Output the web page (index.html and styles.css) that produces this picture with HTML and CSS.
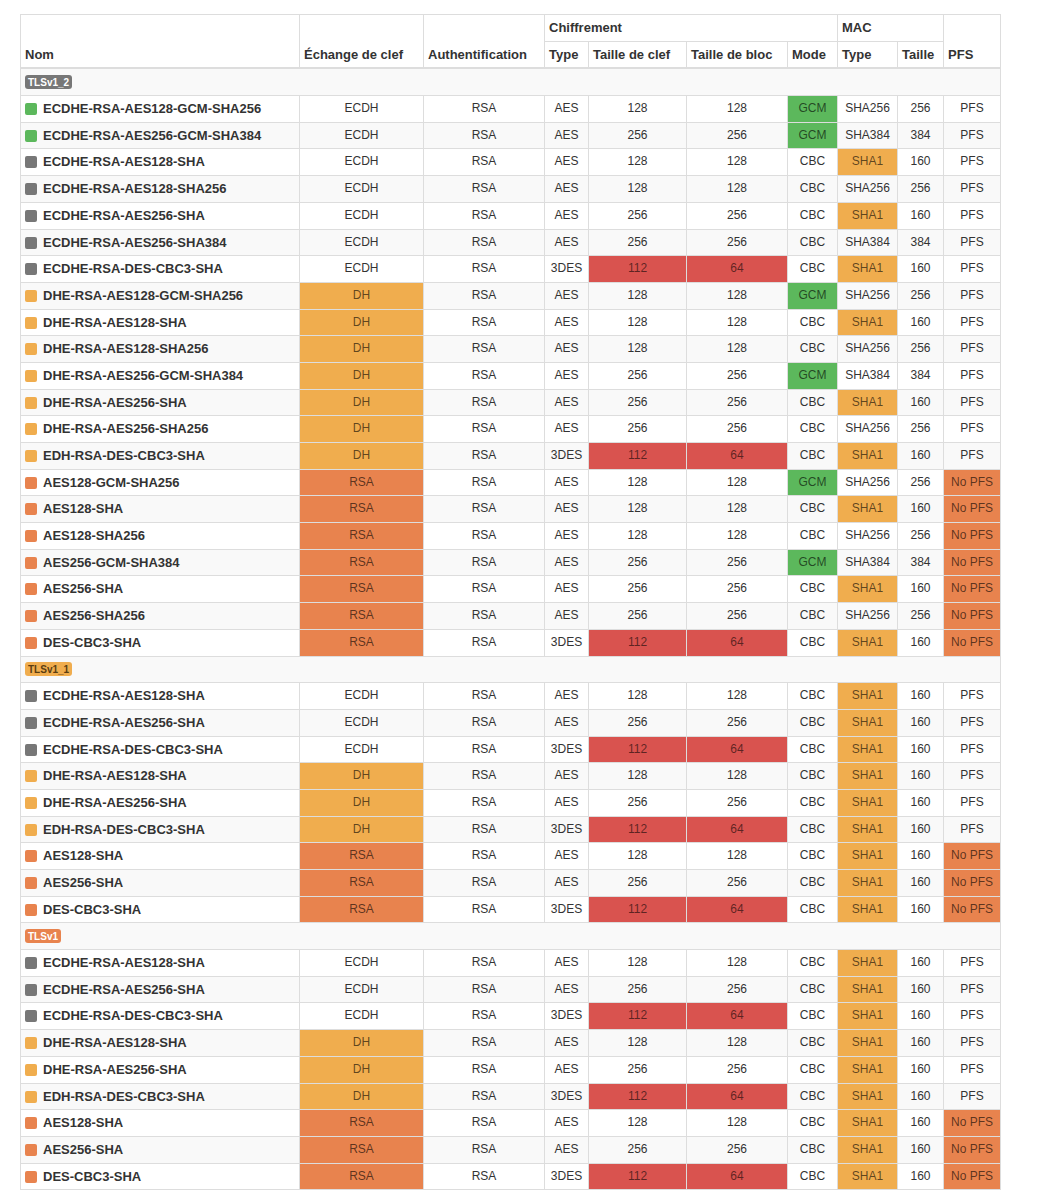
FILE: index.html
```html
<!DOCTYPE html>
<html lang="fr">
<head>
<meta charset="utf-8">
<title>Suites de chiffrement</title>
<link rel="stylesheet" href="styles.css">
</head>
<body>
<div class="wrap">
<table class="ciphers">
<colgroup>
<col class="c-nom"><col class="c-kx"><col class="c-au"><col class="c-ty"><col class="c-ks"><col class="c-bs"><col class="c-mo"><col class="c-mt"><col class="c-ms"><col class="c-pfs">
</colgroup>
<thead>
<tr><th rowspan="2">Nom</th><th rowspan="2">Échange de clef</th><th rowspan="2">Authentification</th><th colspan="4">Chiffrement</th><th colspan="2">MAC</th><th rowspan="2">PFS</th></tr>
<tr><th>Type</th><th>Taille de clef</th><th>Taille de bloc</th><th>Mode</th><th>Type</th><th>Taille</th></tr>
</thead>
<tbody>
<tr class="sect"><td colspan="10"><span class="lbl lbl-gray">TLSv1_2</span></td></tr>
<tr><td class="nm"><span class="sq sq-g"></span>ECDHE-RSA-AES128-GCM-SHA256</td><td>ECDH</td><td>RSA</td><td>AES</td><td>128</td><td>128</td><td class="g">GCM</td><td>SHA256</td><td>256</td><td>PFS</td></tr>
<tr><td class="nm"><span class="sq sq-g"></span>ECDHE-RSA-AES256-GCM-SHA384</td><td>ECDH</td><td>RSA</td><td>AES</td><td>256</td><td>256</td><td class="g">GCM</td><td>SHA384</td><td>384</td><td>PFS</td></tr>
<tr><td class="nm"><span class="sq sq-k"></span>ECDHE-RSA-AES128-SHA</td><td>ECDH</td><td>RSA</td><td>AES</td><td>128</td><td>128</td><td>CBC</td><td class="o">SHA1</td><td>160</td><td>PFS</td></tr>
<tr><td class="nm"><span class="sq sq-k"></span>ECDHE-RSA-AES128-SHA256</td><td>ECDH</td><td>RSA</td><td>AES</td><td>128</td><td>128</td><td>CBC</td><td>SHA256</td><td>256</td><td>PFS</td></tr>
<tr><td class="nm"><span class="sq sq-k"></span>ECDHE-RSA-AES256-SHA</td><td>ECDH</td><td>RSA</td><td>AES</td><td>256</td><td>256</td><td>CBC</td><td class="o">SHA1</td><td>160</td><td>PFS</td></tr>
<tr><td class="nm"><span class="sq sq-k"></span>ECDHE-RSA-AES256-SHA384</td><td>ECDH</td><td>RSA</td><td>AES</td><td>256</td><td>256</td><td>CBC</td><td>SHA384</td><td>384</td><td>PFS</td></tr>
<tr><td class="nm"><span class="sq sq-k"></span>ECDHE-RSA-DES-CBC3-SHA</td><td>ECDH</td><td>RSA</td><td>3DES</td><td class="r">112</td><td class="r">64</td><td>CBC</td><td class="o">SHA1</td><td>160</td><td>PFS</td></tr>
<tr><td class="nm"><span class="sq sq-o"></span>DHE-RSA-AES128-GCM-SHA256</td><td class="o">DH</td><td>RSA</td><td>AES</td><td>128</td><td>128</td><td class="g">GCM</td><td>SHA256</td><td>256</td><td>PFS</td></tr>
<tr><td class="nm"><span class="sq sq-o"></span>DHE-RSA-AES128-SHA</td><td class="o">DH</td><td>RSA</td><td>AES</td><td>128</td><td>128</td><td>CBC</td><td class="o">SHA1</td><td>160</td><td>PFS</td></tr>
<tr><td class="nm"><span class="sq sq-o"></span>DHE-RSA-AES128-SHA256</td><td class="o">DH</td><td>RSA</td><td>AES</td><td>128</td><td>128</td><td>CBC</td><td>SHA256</td><td>256</td><td>PFS</td></tr>
<tr><td class="nm"><span class="sq sq-o"></span>DHE-RSA-AES256-GCM-SHA384</td><td class="o">DH</td><td>RSA</td><td>AES</td><td>256</td><td>256</td><td class="g">GCM</td><td>SHA384</td><td>384</td><td>PFS</td></tr>
<tr><td class="nm"><span class="sq sq-o"></span>DHE-RSA-AES256-SHA</td><td class="o">DH</td><td>RSA</td><td>AES</td><td>256</td><td>256</td><td>CBC</td><td class="o">SHA1</td><td>160</td><td>PFS</td></tr>
<tr><td class="nm"><span class="sq sq-o"></span>DHE-RSA-AES256-SHA256</td><td class="o">DH</td><td>RSA</td><td>AES</td><td>256</td><td>256</td><td>CBC</td><td>SHA256</td><td>256</td><td>PFS</td></tr>
<tr><td class="nm"><span class="sq sq-o"></span>EDH-RSA-DES-CBC3-SHA</td><td class="o">DH</td><td>RSA</td><td>3DES</td><td class="r">112</td><td class="r">64</td><td>CBC</td><td class="o">SHA1</td><td>160</td><td>PFS</td></tr>
<tr><td class="nm"><span class="sq sq-x"></span>AES128-GCM-SHA256</td><td class="x">RSA</td><td>RSA</td><td>AES</td><td>128</td><td>128</td><td class="g">GCM</td><td>SHA256</td><td>256</td><td class="x">No PFS</td></tr>
<tr><td class="nm"><span class="sq sq-x"></span>AES128-SHA</td><td class="x">RSA</td><td>RSA</td><td>AES</td><td>128</td><td>128</td><td>CBC</td><td class="o">SHA1</td><td>160</td><td class="x">No PFS</td></tr>
<tr><td class="nm"><span class="sq sq-x"></span>AES128-SHA256</td><td class="x">RSA</td><td>RSA</td><td>AES</td><td>128</td><td>128</td><td>CBC</td><td>SHA256</td><td>256</td><td class="x">No PFS</td></tr>
<tr><td class="nm"><span class="sq sq-x"></span>AES256-GCM-SHA384</td><td class="x">RSA</td><td>RSA</td><td>AES</td><td>256</td><td>256</td><td class="g">GCM</td><td>SHA384</td><td>384</td><td class="x">No PFS</td></tr>
<tr><td class="nm"><span class="sq sq-x"></span>AES256-SHA</td><td class="x">RSA</td><td>RSA</td><td>AES</td><td>256</td><td>256</td><td>CBC</td><td class="o">SHA1</td><td>160</td><td class="x">No PFS</td></tr>
<tr><td class="nm"><span class="sq sq-x"></span>AES256-SHA256</td><td class="x">RSA</td><td>RSA</td><td>AES</td><td>256</td><td>256</td><td>CBC</td><td>SHA256</td><td>256</td><td class="x">No PFS</td></tr>
<tr><td class="nm"><span class="sq sq-x"></span>DES-CBC3-SHA</td><td class="x">RSA</td><td>RSA</td><td>3DES</td><td class="r">112</td><td class="r">64</td><td>CBC</td><td class="o">SHA1</td><td>160</td><td class="x">No PFS</td></tr>
<tr class="sect"><td colspan="10"><span class="lbl lbl-o">TLSv1_1</span></td></tr>
<tr><td class="nm"><span class="sq sq-k"></span>ECDHE-RSA-AES128-SHA</td><td>ECDH</td><td>RSA</td><td>AES</td><td>128</td><td>128</td><td>CBC</td><td class="o">SHA1</td><td>160</td><td>PFS</td></tr>
<tr><td class="nm"><span class="sq sq-k"></span>ECDHE-RSA-AES256-SHA</td><td>ECDH</td><td>RSA</td><td>AES</td><td>256</td><td>256</td><td>CBC</td><td class="o">SHA1</td><td>160</td><td>PFS</td></tr>
<tr><td class="nm"><span class="sq sq-k"></span>ECDHE-RSA-DES-CBC3-SHA</td><td>ECDH</td><td>RSA</td><td>3DES</td><td class="r">112</td><td class="r">64</td><td>CBC</td><td class="o">SHA1</td><td>160</td><td>PFS</td></tr>
<tr><td class="nm"><span class="sq sq-o"></span>DHE-RSA-AES128-SHA</td><td class="o">DH</td><td>RSA</td><td>AES</td><td>128</td><td>128</td><td>CBC</td><td class="o">SHA1</td><td>160</td><td>PFS</td></tr>
<tr><td class="nm"><span class="sq sq-o"></span>DHE-RSA-AES256-SHA</td><td class="o">DH</td><td>RSA</td><td>AES</td><td>256</td><td>256</td><td>CBC</td><td class="o">SHA1</td><td>160</td><td>PFS</td></tr>
<tr><td class="nm"><span class="sq sq-o"></span>EDH-RSA-DES-CBC3-SHA</td><td class="o">DH</td><td>RSA</td><td>3DES</td><td class="r">112</td><td class="r">64</td><td>CBC</td><td class="o">SHA1</td><td>160</td><td>PFS</td></tr>
<tr><td class="nm"><span class="sq sq-x"></span>AES128-SHA</td><td class="x">RSA</td><td>RSA</td><td>AES</td><td>128</td><td>128</td><td>CBC</td><td class="o">SHA1</td><td>160</td><td class="x">No PFS</td></tr>
<tr><td class="nm"><span class="sq sq-x"></span>AES256-SHA</td><td class="x">RSA</td><td>RSA</td><td>AES</td><td>256</td><td>256</td><td>CBC</td><td class="o">SHA1</td><td>160</td><td class="x">No PFS</td></tr>
<tr><td class="nm"><span class="sq sq-x"></span>DES-CBC3-SHA</td><td class="x">RSA</td><td>RSA</td><td>3DES</td><td class="r">112</td><td class="r">64</td><td>CBC</td><td class="o">SHA1</td><td>160</td><td class="x">No PFS</td></tr>
<tr class="sect"><td colspan="10"><span class="lbl lbl-x">TLSv1</span></td></tr>
<tr><td class="nm"><span class="sq sq-k"></span>ECDHE-RSA-AES128-SHA</td><td>ECDH</td><td>RSA</td><td>AES</td><td>128</td><td>128</td><td>CBC</td><td class="o">SHA1</td><td>160</td><td>PFS</td></tr>
<tr><td class="nm"><span class="sq sq-k"></span>ECDHE-RSA-AES256-SHA</td><td>ECDH</td><td>RSA</td><td>AES</td><td>256</td><td>256</td><td>CBC</td><td class="o">SHA1</td><td>160</td><td>PFS</td></tr>
<tr><td class="nm"><span class="sq sq-k"></span>ECDHE-RSA-DES-CBC3-SHA</td><td>ECDH</td><td>RSA</td><td>3DES</td><td class="r">112</td><td class="r">64</td><td>CBC</td><td class="o">SHA1</td><td>160</td><td>PFS</td></tr>
<tr><td class="nm"><span class="sq sq-o"></span>DHE-RSA-AES128-SHA</td><td class="o">DH</td><td>RSA</td><td>AES</td><td>128</td><td>128</td><td>CBC</td><td class="o">SHA1</td><td>160</td><td>PFS</td></tr>
<tr><td class="nm"><span class="sq sq-o"></span>DHE-RSA-AES256-SHA</td><td class="o">DH</td><td>RSA</td><td>AES</td><td>256</td><td>256</td><td>CBC</td><td class="o">SHA1</td><td>160</td><td>PFS</td></tr>
<tr><td class="nm"><span class="sq sq-o"></span>EDH-RSA-DES-CBC3-SHA</td><td class="o">DH</td><td>RSA</td><td>3DES</td><td class="r">112</td><td class="r">64</td><td>CBC</td><td class="o">SHA1</td><td>160</td><td>PFS</td></tr>
<tr><td class="nm"><span class="sq sq-x"></span>AES128-SHA</td><td class="x">RSA</td><td>RSA</td><td>AES</td><td>128</td><td>128</td><td>CBC</td><td class="o">SHA1</td><td>160</td><td class="x">No PFS</td></tr>
<tr><td class="nm"><span class="sq sq-x"></span>AES256-SHA</td><td class="x">RSA</td><td>RSA</td><td>AES</td><td>256</td><td>256</td><td>CBC</td><td class="o">SHA1</td><td>160</td><td class="x">No PFS</td></tr>
<tr><td class="nm"><span class="sq sq-x"></span>DES-CBC3-SHA</td><td class="x">RSA</td><td>RSA</td><td>3DES</td><td class="r">112</td><td class="r">64</td><td>CBC</td><td class="o">SHA1</td><td>160</td><td class="x">No PFS</td></tr>
</tbody>
</table>
</div>
</body>
</html>
```

FILE: styles.css
```css
html, body {
  margin: 0;
  padding: 0;
  background: #fff;
}

.wrap {
  padding: 14px 0 0 20px;
}

.ciphers {
  border-collapse: collapse;
  table-layout: fixed;
  width: 981px;
  font-family: "Liberation Sans", Arial, Helvetica, sans-serif;
  color: #333;
  border: 1px solid #ddd;
}

.c-nom { width: 279px; }
.c-kx { width: 124px; }
.c-au { width: 121px; }
.c-ty { width: 44px; }
.c-ks { width: 98px; }
.c-bs { width: 101px; }
.c-mo { width: 50px; }
.c-mt { width: 60px; }
.c-ms { width: 46px; }
.c-pfs { width: 57px; }

.ciphers th,
.ciphers td {
  border: 1px solid #ddd;
  padding: 4px 4px;
  line-height: 17.68px;
  white-space: nowrap;
  overflow: hidden;
}

.ciphers th {
  font-size: 13px;
  font-weight: bold;
  text-align: left;
  vertical-align: bottom;
}

.ciphers thead tr:last-child th,
.ciphers thead th[rowspan] {
  border-bottom: 2px solid #ddd;
}

.ciphers td {
  font-size: 12px;
  text-align: center;
  vertical-align: middle;
}

.ciphers tbody tr:nth-child(odd) td {
  background: #f9f9f9;
}

.ciphers td.nm {
  text-align: left;
  font-size: 13px;
  font-weight: bold;
}

.sq {
  display: inline-block;
  width: 12px;
  height: 12px;
  border-radius: 2px;
  margin-right: 6px;
  vertical-align: -2px;
}

.sq-g { background: #5cb85c; }
.sq-k { background: #777; }
.sq-o { background: #f0ad4e; }
.sq-x { background: #e8834e; }

.ciphers tbody tr td.g { background: #5cb85c; color: rgba(0, 0, 0, 0.62); }
.ciphers tbody tr td.o { background: #f0ad4e; color: rgba(0, 0, 0, 0.62); }
.ciphers tbody tr td.r { background: #d9534f; color: rgba(0, 0, 0, 0.58); }
.ciphers tbody tr td.x { background: #e8834e; color: rgba(0, 0, 0, 0.62); }

.ciphers .sect td {
  text-align: left;
}

.lbl {
  display: inline-block;
  font-size: 10px;
  font-weight: bold;
  line-height: 13px;
  padding: 1px 3px 0;
  border-radius: 3px;
  color: #fff;
  vertical-align: middle;
}

.lbl-gray { background: #777; }
.lbl-o { background: #f0ad4e; color: #5a3d12; }
.lbl-x { background: #e8834e; }
```
